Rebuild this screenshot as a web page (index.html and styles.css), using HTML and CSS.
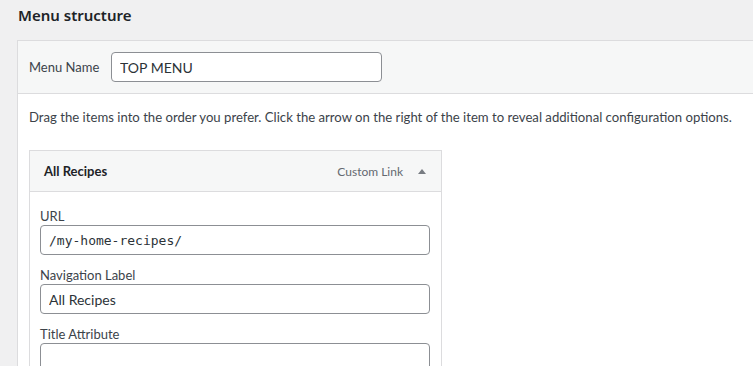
FILE: index.html
```html
<!DOCTYPE html>
<html lang="en">
<head>
  <meta charset="UTF-8">
  <title>Menu structure</title>
  <link rel="stylesheet" href="styles.css">
</head>
<body>

  <h2 class="title">Menu structure</h2>

  <div class="menu-panel">
    <div class="panel-header">
      <label class="name-label" for="menuName">Menu Name</label>
      <input type="text" id="menuName" class="name-input" value="TOP MENU">
    </div>

    <div class="panel-body">
      <p class="drag-hint">Drag the items into the order you prefer. Click the arrow on the right of the item to reveal additional configuration options.</p>

      <div class="menu-item">
        <div class="item-bar">
          <span class="item-title">All Recipes</span>
          <span class="item-type">Custom Link</span>
          <span class="item-arrow">
            <svg width="10" height="6" viewBox="0 0 10 6"><path d="M1 6 L5 1 L9 6 Z" fill="#787c82"/></svg>
          </span>
        </div>
        <div class="item-settings">
          <label class="field-label">URL</label>
          <input type="text" class="field-input code" value="/my-home-recipes/">
          <label class="field-label">Navigation Label</label>
          <input type="text" class="field-input" value="All Recipes">
          <label class="field-label">Title Attribute</label>
          <input type="text" class="field-input" value="">
        </div>
      </div>
    </div>
  </div>

</body>
</html>
```

FILE: styles.css
```css
body {
  margin: 0;
  height: 366px;
  background-color: #f0f0f1;
  font-family: "Lato", "Noto Sans", sans-serif;
  font-size: 13px;
  color: #3c434a;
  overflow: hidden;
}

.title {
  margin: 0;
  padding: 5px 0 0 18px;
  height: 35px;
  font-family: "Noto Sans", sans-serif;
  font-size: 15px;
  font-weight: 600;
  color: #1d2327;
}

.menu-panel {
  margin-left: 17px;
  width: 760px;
  border: 1px solid #dcdcde;
  border-right: none;
}

.panel-header {
  display: flex;
  align-items: center;
  height: 52px;
  padding-left: 11px;
  background-color: #f6f7f7;
  border-bottom: 1px solid #dcdcde;
}

.name-label {
  width: 82px;
  color: #3c434a;
}

.name-input,
.field-input {
  box-sizing: border-box;
  height: 30px;
  padding: 0 8px;
  border: 1px solid #8c8f94;
  border-radius: 4px;
  background: #fff;
  font-family: inherit;
  font-size: 14px;
  color: #2c3338;
}

.name-input {
  width: 271px;
}

.panel-body {
  background-color: #fff;
  padding: 12px 11px 0;
  height: 300px;
}

.drag-hint {
  margin: 0 0 22px;
  line-height: 22px;
  font-size: 13.15px;
  white-space: nowrap;
}

.menu-item {
  width: 411px;
  border: 1px solid #dcdcde;
}

.item-bar {
  display: flex;
  align-items: center;
  height: 40px;
  padding: 0 14px;
  background-color: #f6f7f7;
  border-bottom: 1px solid #dcdcde;
}

.item-title {
  flex: 1;
  font-weight: 700;
  color: #1d2327;
}

.item-type {
  font-size: 12px;
  color: #646970;
  margin-right: 14px;
}

.item-arrow {
  display: flex;
}

.item-settings {
  display: flex;
  flex-direction: column;
  padding: 16px 11px 20px 10px;
}

.field-label {
  line-height: 16px;
  margin-bottom: 1px;
}

.field-input {
  width: 100%;
  margin-bottom: 12px;
}

.code {
  font-family: "DejaVu Sans Mono", "Liberation Mono", monospace;
  font-size: 13px;
}
```
